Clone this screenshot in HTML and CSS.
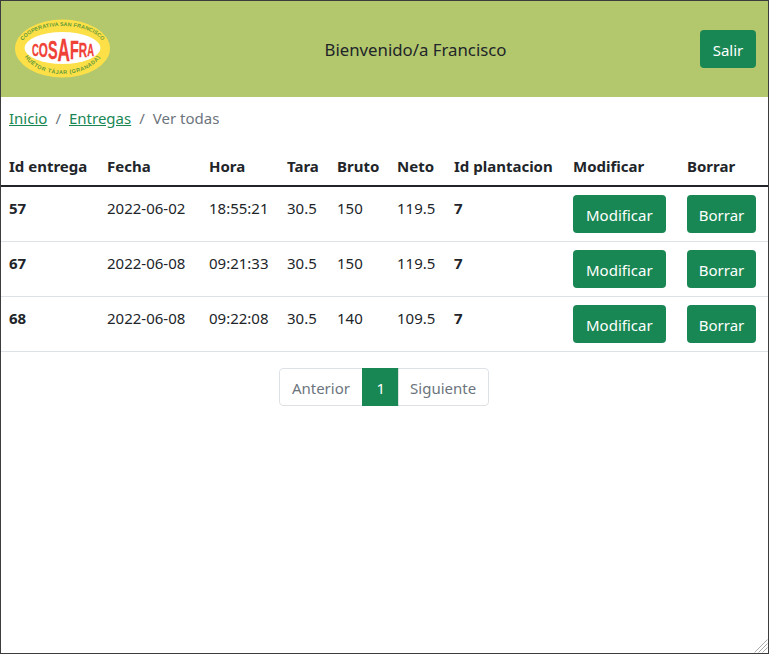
FILE: index.html
```html
<!DOCTYPE html>
<html lang="es">
<head>
    <meta charset="UTF-8">
    <meta name="viewport" content="width=device-width, initial-scale=1.0">
    <title>Entregas</title>
    <link rel="stylesheet" href="styles.css">
</head>
<body>
    <header class="topbar">
        <svg class="logo" width="96" height="60" viewBox="0 0 96 60">
            <defs>
                <path id="arcTop" d="M5.5 29 A42 22 0 0 1 89.5 29"/>
                <path id="arcBottom" d="M7.5 29 A40 26 0 0 0 87.5 29"/>
            </defs>
            <ellipse cx="47.5" cy="29.5" rx="47.5" ry="29" fill="#fde047"/>
            <ellipse cx="47.5" cy="29" rx="38" ry="16" fill="#fff"/>
            <text class="logo-small"><textPath href="#arcTop" startOffset="50%" text-anchor="middle">COOPERATIVA SAN FRANCISCO</textPath></text>
            <text class="logo-small logo-bottom"><textPath href="#arcBottom" startOffset="50%" text-anchor="middle">HUÉTOR TÁJAR (GRANADA)</textPath></text>
            <text class="logo-name" y="37" transform="translate(48 0) scale(.555 1)" text-anchor="middle"><tspan font-size="17">C</tspan><tspan dy="1.5" font-size="21">O</tspan><tspan dy="2" font-size="26">S</tspan><tspan dy="1.5" font-size="31">A</tspan><tspan dy="-1.5" font-size="26">F</tspan><tspan dy="-2" font-size="21">R</tspan><tspan dy="-1.5" font-size="17">A</tspan></text>
        </svg>
        <span class="welcome">Bienvenido/a Francisco</span>
        <a class="btn btn-exit" href="#">Salir</a>
    </header>

    <nav class="breadcrumb">
        <a href="#">Inicio</a>
        <span class="sep">/</span>
        <a href="#">Entregas</a>
        <span class="sep">/</span>
        <span class="current">Ver todas</span>
    </nav>

    <table class="deliveries">
        <colgroup>
            <col class="c1"><col class="c2"><col class="c3"><col class="c4"><col class="c5">
            <col class="c6"><col class="c7"><col class="c8"><col class="c9">
        </colgroup>
        <thead>
            <tr>
                <th>Id entrega</th>
                <th>Fecha</th>
                <th>Hora</th>
                <th>Tara</th>
                <th>Bruto</th>
                <th>Neto</th>
                <th>Id plantacion</th>
                <th>Modificar</th>
                <th>Borrar</th>
            </tr>
        </thead>
        <tbody>
            <tr>
                <th>57</th>
                <td>2022-06-02</td>
                <td>18:55:21</td>
                <td>30.5</td>
                <td>150</td>
                <td>119.5</td>
                <th>7</th>
                <td class="actions"><a class="btn" href="#">Modificar</a></td>
                <td class="actions"><a class="btn btn-delete" href="#">Borrar</a></td>
            </tr>
            <tr>
                <th>67</th>
                <td>2022-06-08</td>
                <td>09:21:33</td>
                <td>30.5</td>
                <td>150</td>
                <td>119.5</td>
                <th>7</th>
                <td class="actions"><a class="btn" href="#">Modificar</a></td>
                <td class="actions"><a class="btn btn-delete" href="#">Borrar</a></td>
            </tr>
            <tr>
                <th>68</th>
                <td>2022-06-08</td>
                <td>09:22:08</td>
                <td>30.5</td>
                <td>140</td>
                <td>109.5</td>
                <th>7</th>
                <td class="actions"><a class="btn" href="#">Modificar</a></td>
                <td class="actions"><a class="btn btn-delete" href="#">Borrar</a></td>
            </tr>
        </tbody>
    </table>

    <ul class="pagination">
        <li><a href="#">Anterior</a></li>
        <li class="active"><a href="#">1</a></li>
        <li><a href="#">Siguiente</a></li>
    </ul>

    <svg class="grip" width="14" height="14" viewBox="0 0 14 14">
        <path d="M13.5 .5 L.5 13.5 M13.5 4.5 L4.5 13.5 M13.5 8.5 L8.5 13.5" stroke="#aaa" fill="none"/>
    </svg>
</body>
</html>
```

FILE: styles.css
```css
* {
    margin: 0;
    padding: 0;
    box-sizing: border-box;
}
body {
    position: relative;
    height: 654px;
    overflow: hidden;
    border: 1px solid #3c3c3c;
    background: #fff;
    color: #212529;
    font-family: "Noto Sans", sans-serif;
    font-size: 15px;
    line-height: 22px;
}
a {
    color: #198754;
}
.topbar {
    display: flex;
    align-items: center;
    justify-content: space-between;
    height: 96px;
    padding: 0 12px 0 14px;
    background: #b3c76d;
}
.logo {
    display: block;
}
.logo-small {
    font-family: "Liberation Sans", sans-serif;
    font-size: 5.4px;
    font-weight: 700;
    letter-spacing: .1px;
    fill: #5d9a3a;
}
.logo-bottom {
    letter-spacing: .5px;
}
.logo-name {
    font-family: "Liberation Sans", sans-serif;
    font-weight: 700;
    fill: #ef4136;
    stroke: #ef4136;
    stroke-width: .3;
}
.welcome {
    margin-left: 20px;
    padding-top: 2px;
    font-size: 16.8px;
}
.btn {
    display: inline-block;
    height: 38px;
    padding: 9px 13px 7px;
    border-radius: 4px;
    background: #198754;
    color: #fff;
    line-height: 22px;
    text-decoration: none;
}
.btn-exit {
    width: 56px;
    padding-left: 0;
    padding-right: 0;
    text-align: center;
}
.btn-delete {
    width: 69px;
    padding-left: 0;
    padding-right: 0;
    text-align: center;
}
.breadcrumb {
    display: flex;
    gap: 8px;
    padding: 10px 8px 0;
    height: 50px;
    color: #6c757d;
}
.deliveries {
    width: 767px;
    table-layout: fixed;
    border-collapse: collapse;
}
.c1 { width: 98px; }
.c2 { width: 102px; }
.c3 { width: 78px; }
.c4 { width: 50px; }
.c5 { width: 60px; }
.c6 { width: 57px; }
.c7 { width: 119px; }
.c8 { width: 114px; }
.c9 { width: 89px; }
.deliveries th,
.deliveries td {
    padding: 8px;
    text-align: left;
    vertical-align: top;
    white-space: nowrap;
}
.deliveries thead tr {
    height: 39px;
    border-bottom: 2px solid #212529;
}
.deliveries tbody tr {
    height: 55px;
    border-bottom: 1px solid #dee2e6;
}
.deliveries tbody th,
.deliveries tbody td {
    padding-top: 10px;
}
.deliveries tbody td.actions {
    padding-top: 8px;
}
.pagination {
    display: flex;
    justify-content: center;
    margin-top: 16px;
    list-style: none;
}
.pagination a {
    display: block;
    height: 38px;
    padding: 8px 12px;
    border: 1px solid #dee2e6;
    margin-left: -1px;
    color: #6c757d;
    text-decoration: none;
}
.pagination li:first-child a {
    padding-right: 12.5px;
    border-radius: 4px 0 0 4px;
}
.pagination li:last-child a {
    padding-left: 11px;
    border-radius: 0 4px 4px 0;
}
.pagination .active a {
    padding: 8px 13px;
    background: #198754;
    border-color: #198754;
    color: #fff;
}
.grip {
    position: absolute;
    right: 0;
    bottom: 0;
}
```
